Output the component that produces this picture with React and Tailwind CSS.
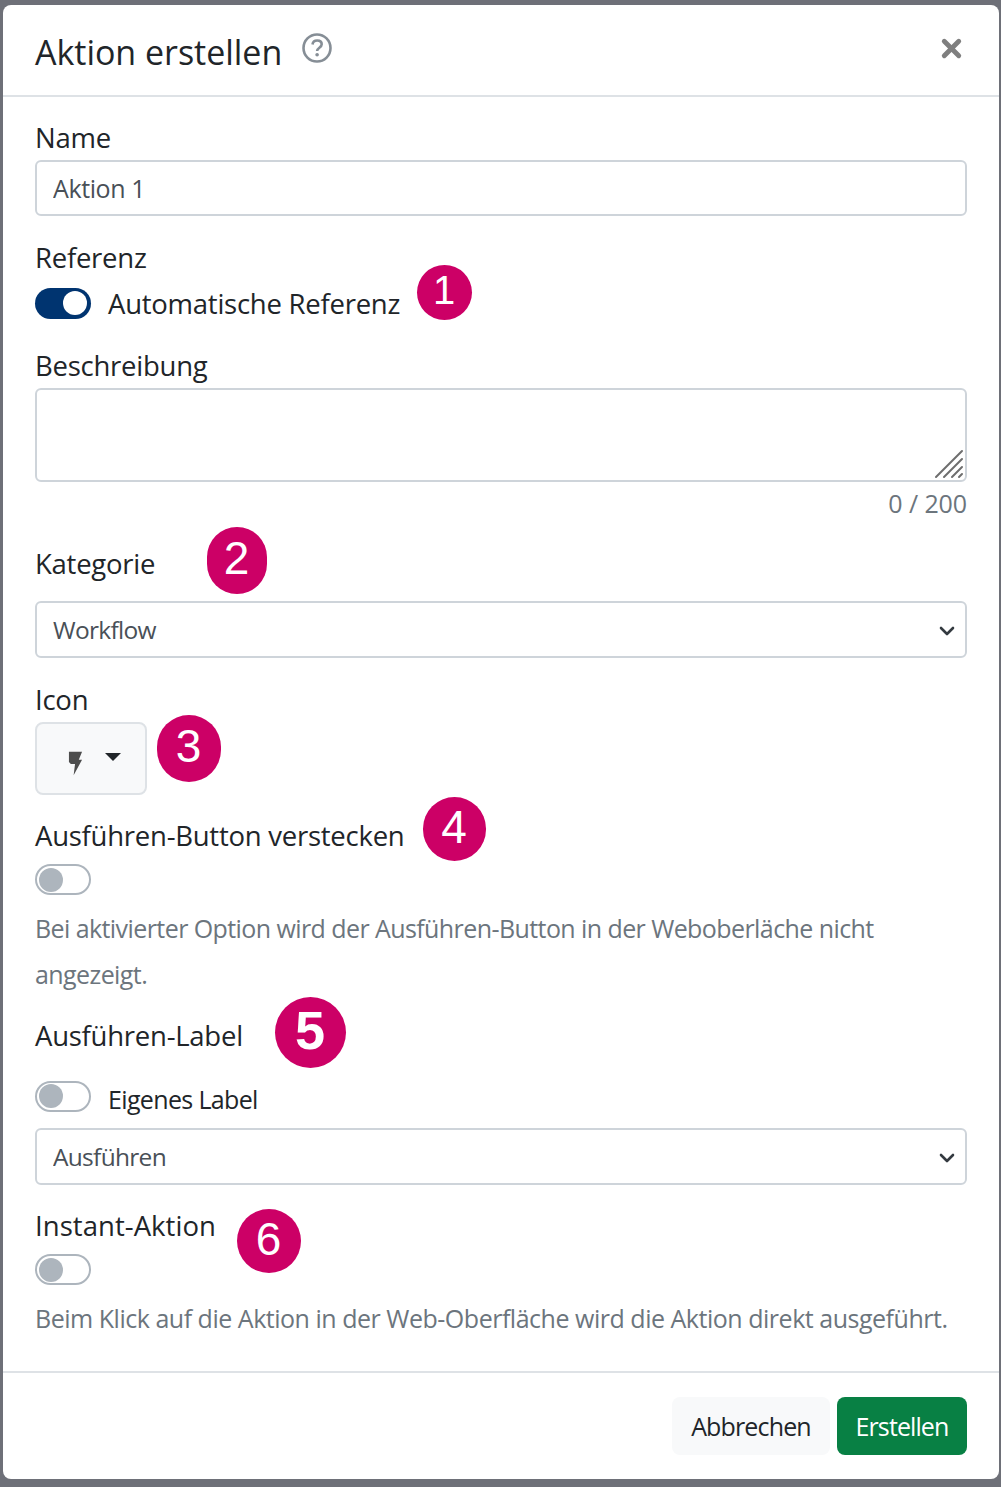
import React from 'react'
import { X } from 'lucide-react'

const font = { fontFamily: '"Open Sans", sans-serif' }

function Badge({ n, className }) {
    return (
        <span className={"absolute flex items-center justify-center rounded-full bg-[#cc0066] pb-[5px] pr-[1px] text-white font-['Liberation_Sans'] " + className}>{n}</span>
    )
}

function Toggle({ on }) {
    if (on) {
        return (
            <span className="flex h-[31px] w-[56px] shrink-0 items-center justify-end rounded-full bg-[#003470] pr-[4px]">
                <span className="h-[24px] w-[24px] rounded-full bg-white" />
            </span>
        )
    }
    return (
        <span className="flex h-[31px] w-[56px] shrink-0 items-center rounded-full border-2 border-[#adb5bd] bg-white pl-[2px]">
            <span className="h-[24px] w-[24px] rounded-full bg-[#adb5bd]" />
        </span>
    )
}

function Label({ children, className = "" }) {
    return <div className={"relative h-[36px] text-[27.5px] leading-[36px] tracking-[-0.25px] text-[#212529] " + className}>{children}</div>
}

function SelectBox({ value, className = "" }) {
    return (
        <div className={"relative h-[57px] " + className}>
            <select defaultValue={value} className="h-full w-full appearance-none rounded-[6px] border-2 border-[#ced4da] bg-white pl-[16px] pt-[2px] text-[24.5px] tracking-[-0.7px] text-[#495057]">
                <option>{value}</option>
            </select>
            <svg className="pointer-events-none absolute right-[12px] top-[24px]" width="16" height="13" viewBox="0 0 16 13" fill="none">
                <path d="M2 3l6 6 6-6" stroke="#343a40" strokeWidth="2.6" strokeLinecap="round" strokeLinejoin="round" />
            </svg>
        </div>
    )
}

export default function App() {
    return (
        <div style={font} className="h-[1487px] w-[1001px] overflow-hidden bg-[#6e7078] pl-[3px] pt-[5px]">
            <div className="flex h-[1474px] w-[996px] flex-col rounded-[8px] bg-white">
                <div className="relative flex h-[92px] shrink-0 items-center border-b-2 border-[#dee2e6] pl-[32px]">
                    <h5 className="mt-[4px] text-[34px] leading-[46px] tracking-[-0.03px] text-[#212529]">Aktion erstellen</h5>
                    <svg className="ml-[20px] mt-[-4px]" width="30" height="30" viewBox="0 0 30 30" fill="none">
                        <circle cx="15" cy="15" r="13.5" stroke="#868e96" strokeWidth="2.6" />
                        <path d="M10.5 11.5c.3-2.6 2.2-4 4.7-4 2.6 0 4.5 1.5 4.5 3.8 0 3.4-4.6 3.4-4.6 6.7" stroke="#868e96" strokeWidth="2.6" fill="none" />
                        <circle cx="15.1" cy="21.8" r="1.8" fill="#868e96" />
                    </svg>
                    <X className="absolute right-[33px] top-[29px] text-[#7f7f7f]" size={29} strokeWidth={4} />
                </div>

                <div className="flex-1 pl-[32px] pr-[32px] pt-[23px]">
                    <Label>Name</Label>
                    <input defaultValue="Aktion 1" className="mt-[4px] h-[56px] w-full rounded-[6px] border-2 border-[#ced4da] pl-[16px] text-[25px] tracking-[-0.4px] text-[#495057]" />

                    <Label className="mt-[24px]">Referenz</Label>
                    <div className="relative mt-[9px] flex h-[36px] items-center gap-[17px] text-[27.5px] tracking-[-0.25px] text-[#212529]">
                        <Toggle on />
                        <span className="mt-[2px]">Automatische Referenz</span>
                        <Badge n="1" className="left-[382px] top-[-20px] h-[55px] w-[55px] text-[40px]" />
                    </div>

                    <Label className="mt-[27px]">Beschreibung</Label>
                    <div className="relative mt-[4px] h-[94px]">
                        <textarea className="block h-full w-full resize-none rounded-[6px] border-2 border-[#ced4da]" />
                        <svg className="pointer-events-none absolute bottom-[3px] right-[3px]" width="30" height="30" viewBox="0 0 30 30" stroke="#6e6e6e" strokeWidth="2" strokeLinecap="round">
                            <path d="M2 28L28 2M10 28L28 10M18 28L28 18M25 28L28 25" />
                        </svg>
                    </div>
                    <div className="mt-[3px] h-[36px] text-right text-[25px] leading-[36px] tracking-[-0.1px] text-[#6c757d]">0 / 200</div>

                    <Label className="mt-[25px]">
                        Kategorie
                        <Badge n="2" className="left-[172px] top-[-19px] h-[67px] w-[60px] text-[46px]" />
                    </Label>
                    <SelectBox value="Workflow" className="mt-[19px]" />

                    <Label className="mt-[24px]">Icon</Label>
                    <div className="relative mt-[4px] flex h-[73px] w-[112px] items-center justify-center gap-[21px] rounded-[8px] border-2 border-[#dee2e6] bg-[#f8f9fa] pl-[7px]">
                        <svg width="15" height="25" viewBox="0 0 16 25" className="mt-[9px]">
                            <path d="M1 0h14l-3.5 8.5H15L6 25l1.5-12H3L1 11z" fill="#4d4d4d" />
                        </svg>
                        <svg width="18" height="10" viewBox="0 0 18 10" className="mt-[-4px]">
                            <path d="M1 1h16l-8 8z" fill="#212529" />
                        </svg>
                        <Badge n="3" className="left-[120px] top-[-9px] h-[67px] w-[64px] text-[46px]" />
                    </div>

                    <Label className="mt-[23px]">
                        Ausführen-Button verstecken
                        <Badge n="4" className="left-[388px] top-[-21px] h-[64px] w-[63px] text-[46px]" />
                    </Label>
                    <div className="mt-[10px]"><Toggle /></div>
                    <p className="mt-[10px] text-[25px] leading-[46px] tracking-[-0.58px] text-[#6c757d]">Bei aktivierter Option wird der Ausführen-Button in der Weboberläche nicht angezeigt.</p>

                    <Label className="mt-[21px]">
                        Ausführen-Label
                        <Badge n="5" className="left-[240px] top-[-21px] h-[71px] w-[71px] text-[54px] font-bold" />
                    </Label>
                    <div className="mt-[25px] flex h-[36px] items-center gap-[17px] text-[25px] tracking-[-0.65px] text-[#212529]">
                        <div className="mt-[-2px]"><Toggle /></div>
                        <span className="mt-[6px]">Eigenes Label</span>
                    </div>
                    <SelectBox value="Ausführen" className="mt-[13px]" />

                    <Label className="mt-[23px] tracking-[0.05px]">
                        Instant-Aktion
                        <Badge n="6" className="left-[202px] top-[1px] h-[64px] w-[64px] text-[46px]" />
                    </Label>
                    <div className="mt-[10px]"><Toggle /></div>
                    <p className="mt-[10px] whitespace-nowrap text-[25px] leading-[46px] tracking-[-0.48px] text-[#6c757d]">Beim Klick auf die Aktion in der Web-Oberfläche wird die Aktion direkt ausgeführt.</p>
                </div>

                <div className="flex h-[108px] shrink-0 items-start justify-end gap-[7px] border-t-2 border-[#dee2e6] pr-[32px] pt-[24px]">
                    <button className="h-[58px] w-[158px] rounded-[8px] bg-[#f8f9fa] pt-[2px] text-[25px] tracking-[-0.85px] text-[#212529]">Abbrechen</button>
                    <button className="h-[58px] w-[130px] rounded-[8px] bg-[#088044] pt-[2px] text-[25px] tracking-[-0.9px] text-white">Erstellen</button>
                </div>
            </div>
        </div>
    )
}
